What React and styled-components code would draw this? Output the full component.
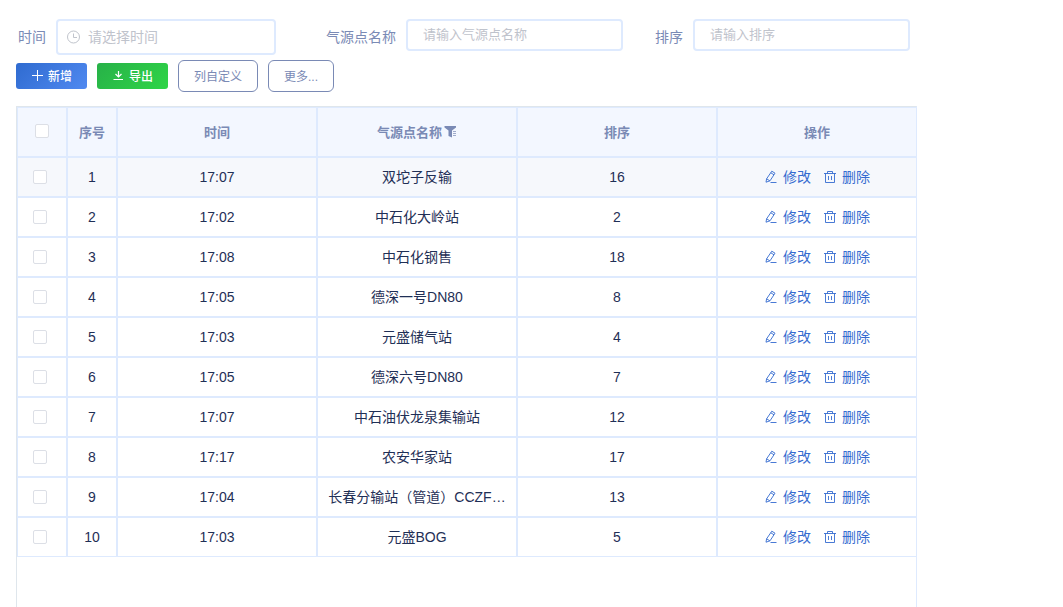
import React from 'react';
import styled, { createGlobalStyle } from 'styled-components';

const GlobalStyle = createGlobalStyle`
  *, *::before, *::after { box-sizing: border-box; }
  body {
    margin: 0;
    background: #fff;
    font-family: "Liberation Sans", "Noto Sans CJK SC", sans-serif;
    font-size: 14px;
  }
  button, input { font-family: inherit; }
`;

const Page = styled.main`
  display: flex;
  flex-direction: column;
  height: 100vh;
  padding: 19px 16px 0;
`;

const Filters = styled.form`
  display: flex;
  flex-wrap: wrap;
  align-items: flex-start;
  gap: 5px 32px;
  padding-left: 2px;
`;

const Field = styled.div`
  display: flex;
  align-items: flex-start;
  gap: 10px;
  margin-right: ${(p) => (p.$wide ? '18px' : '0')};
`;

const FieldLabel = styled.label`
  color: #7a8ab5;
  line-height: 36px;
`;

const InputBox = styled.div`
  display: flex;
  align-items: center;
  gap: 7px;
  width: ${(p) => (p.$wide ? '220px' : '217px')};
  height: ${(p) => (p.$wide ? '36px' : '32px')};
  padding: ${(p) => (p.$wide ? '0 9px' : '0 15px')};
  border: 2px solid #deeafe;
  border-radius: 4px;
  color: #c0c4cc;
`;

const TextInput = styled.input`
  flex: 1;
  min-width: 0;
  padding: 0;
  border: 0;
  outline: 0;
  background: none;
  color: #1f3864;
  font-size: ${(p) => (p.$wide ? '14px' : '13px')};
  line-height: 20px;
  &::placeholder { color: #bfc3cc; opacity: 1; }
`;

const Toolbar = styled.div`
  display: flex;
  align-items: center;
  gap: 10px;
  margin: 5px 0 14px;
`;

const SolidButton = styled.button`
  display: flex;
  align-items: center;
  justify-content: center;
  gap: 5px;
  width: 71px;
  height: 26px;
  padding: 0 0 2px;
  border: 0;
  border-radius: 3px;
  color: #fff;
  font-size: 12px;
  font-weight: 500;
  background: ${(p) =>
    p.$tone === 'green'
      ? 'linear-gradient(135deg, #27b148, #2fd547)'
      : 'linear-gradient(135deg, #2f6bd0, #5089f0)'};
`;

const OutlineButton = styled.button`
  height: 32px;
  padding: 0 15px 2px;
  border: 1px solid #7a8ab5;
  border-radius: 6px;
  background: #fff;
  color: #7a8ab5;
  font-size: 12px;
`;

const Panel = styled.section`
  flex: 1;
  max-width: 901px;
  min-height: 0;
  overflow: hidden;
  border: 1px solid #dfe6ec;
  border-right-color: #deeafe;
  border-bottom: 0;
`;

const Table = styled.table`
  width: calc(100% + 1px);
  table-layout: fixed;
  border-collapse: separate;
  border-spacing: 0;
`;

const Col = styled.col`
  width: ${(p) => (p.$narrow ? '50px' : 'auto')};
`;

const HeadCell = styled.th`
  height: 50px;
  padding: 0 0 2px;
  border: 1px solid #deeafe;
  background: #f3f7ff;
  color: #7a8ab5;
  font-size: 13px;
  font-weight: 700;
`;

const HeadContent = styled.span`
  display: flex;
  align-items: center;
  justify-content: center;
  gap: 2px;
`;

const Cell = styled.td`
  height: 40px;
  padding: ${(p) => (p.$check ? '0 4px 0 0' : '0 10px')};
  border: 1px solid #deeafe;
  color: #1f2f56;
  line-height: 20px;
  text-align: center;
  white-space: nowrap;
  overflow: hidden;
  text-overflow: ellipsis;
`;

const Row = styled.tr`
  background: ${(p) => (p.$active ? '#f6f8fc' : '#fff')};
`;

const Checkbox = styled.input`
  display: block;
  appearance: none;
  width: 14px;
  height: 14px;
  margin: 0 auto;
  border: 1px solid #dcdfe6;
  border-radius: 2px;
  background: #fff;
  &:checked { background: #2f6bd0; }
`;

const Actions = styled.div`
  display: flex;
  justify-content: center;
  gap: 12px;
`;

const TextButton = styled.button`
  display: flex;
  align-items: center;
  gap: 5px;
  padding: 0;
  border: 0;
  background: none;
  color: #346bd0;
  font-size: 14px;
  line-height: 20px;
`;

const Svg = styled.svg`
  flex: none;
  fill: none;
  stroke: currentColor;
`;

const ClockIcon = () => (
  <Svg width="14" height="14" viewBox="0 0 14 14" aria-hidden="true">
    <circle cx="6.5" cy="7" r="6" />
    <path d="M6.5 3.5V7.5H10" />
  </Svg>
);

const PlusIcon = () => (
  <Svg width="12" height="12" viewBox="0 0 12 12" aria-hidden="true">
    <path d="M6.5 1V12M1 6.5H12" />
  </Svg>
);

const DownloadIcon = () => (
  <Svg width="12" height="12" viewBox="0 0 12 12" aria-hidden="true">
    <path d="M6.5 2V8M3.5 5L6.5 8L9.5 5M1.5 10.5H11" strokeWidth="1.2" />
  </Svg>
);

const FilterIcon = () => (
  <Svg width="13" height="13" viewBox="0 0 13 13" aria-hidden="true">
    <path d="M0.5 1H12V2.5L8 5.5V12.5L4.5 11V5.5L0.5 2.5Z" fill="currentColor" stroke="none" />
    <path d="M9 6.5H12M9 8.5H12M9 10.5H12" opacity="0.7" />
  </Svg>
);

const EditIcon = () => (
  <Svg width="14" height="14" viewBox="0 0 14 14" strokeWidth="0.9" aria-hidden="true">
    <path d="M7.8 1.2L11 3.2L6 10.8L2 12.2L2.6 8.8ZM6.8 2.8L10 4.8M2.6 8.8L5.8 10.8M6.5 12.5H12.5" />
  </Svg>
);

const TrashIcon = () => (
  <Svg width="14" height="14" viewBox="0 0 14 14" strokeWidth="0.9" aria-hidden="true">
    <path d="M1 3.5H13M4.5 3.5V1.5H9.5V3.5M2.5 3.5V12.5H11.5V3.5M5.5 6V10M8.5 6V10" />
  </Svg>
);

const rows = [
  ['17:07', '双坨子反输', 16],
  ['17:02', '中石化大岭站', 2],
  ['17:08', '中石化钢售', 18],
  ['17:05', '德深一号DN80', 8],
  ['17:03', '元盛储气站', 4],
  ['17:05', '德深六号DN80', 7],
  ['17:07', '中石油伏龙泉集输站', 12],
  ['17:17', '农安华家站', 17],
  ['17:04', '长春分输站（管道）CCZF…', 13],
  ['17:03', '元盛BOG', 5],
];

export default function App() {
  return (
    <>
      <GlobalStyle />
      <Page>
        <Filters>
          <Field $wide>
            <FieldLabel htmlFor="time">时间</FieldLabel>
            <InputBox $wide>
              <ClockIcon />
              <TextInput $wide id="time" placeholder="请选择时间" />
            </InputBox>
          </Field>
          <Field>
            <FieldLabel htmlFor="name">气源点名称</FieldLabel>
            <InputBox>
              <TextInput id="name" placeholder="请输入气源点名称" />
            </InputBox>
          </Field>
          <Field>
            <FieldLabel htmlFor="order">排序</FieldLabel>
            <InputBox>
              <TextInput id="order" placeholder="请输入排序" />
            </InputBox>
          </Field>
        </Filters>
        <Toolbar>
          <SolidButton type="button"><PlusIcon />新增</SolidButton>
          <SolidButton type="button" $tone="green"><DownloadIcon />导出</SolidButton>
          <OutlineButton type="button">列自定义</OutlineButton>
          <OutlineButton type="button">更多...</OutlineButton>
        </Toolbar>
        <Panel>
          <Table>
            <colgroup>
              <Col $narrow />
              <Col $narrow />
              <Col />
              <Col />
              <Col />
              <Col />
            </colgroup>
            <thead>
              <tr>
                <HeadCell><Checkbox type="checkbox" aria-label="全选" /></HeadCell>
                <HeadCell>序号</HeadCell>
                <HeadCell>时间</HeadCell>
                <HeadCell><HeadContent>气源点名称<FilterIcon /></HeadContent></HeadCell>
                <HeadCell>排序</HeadCell>
                <HeadCell>操作</HeadCell>
              </tr>
            </thead>
            <tbody>
              {rows.map(([time, name, order], i) => (
                <Row key={name} $active={i === 0}>
                  <Cell $check><Checkbox type="checkbox" aria-label={name} /></Cell>
                  <Cell>{i + 1}</Cell>
                  <Cell>{time}</Cell>
                  <Cell>{name}</Cell>
                  <Cell>{order}</Cell>
                  <Cell>
                    <Actions>
                      <TextButton type="button"><EditIcon />修改</TextButton>
                      <TextButton type="button"><TrashIcon />删除</TextButton>
                    </Actions>
                  </Cell>
                </Row>
              ))}
            </tbody>
          </Table>
        </Panel>
      </Page>
    </>
  );
}
